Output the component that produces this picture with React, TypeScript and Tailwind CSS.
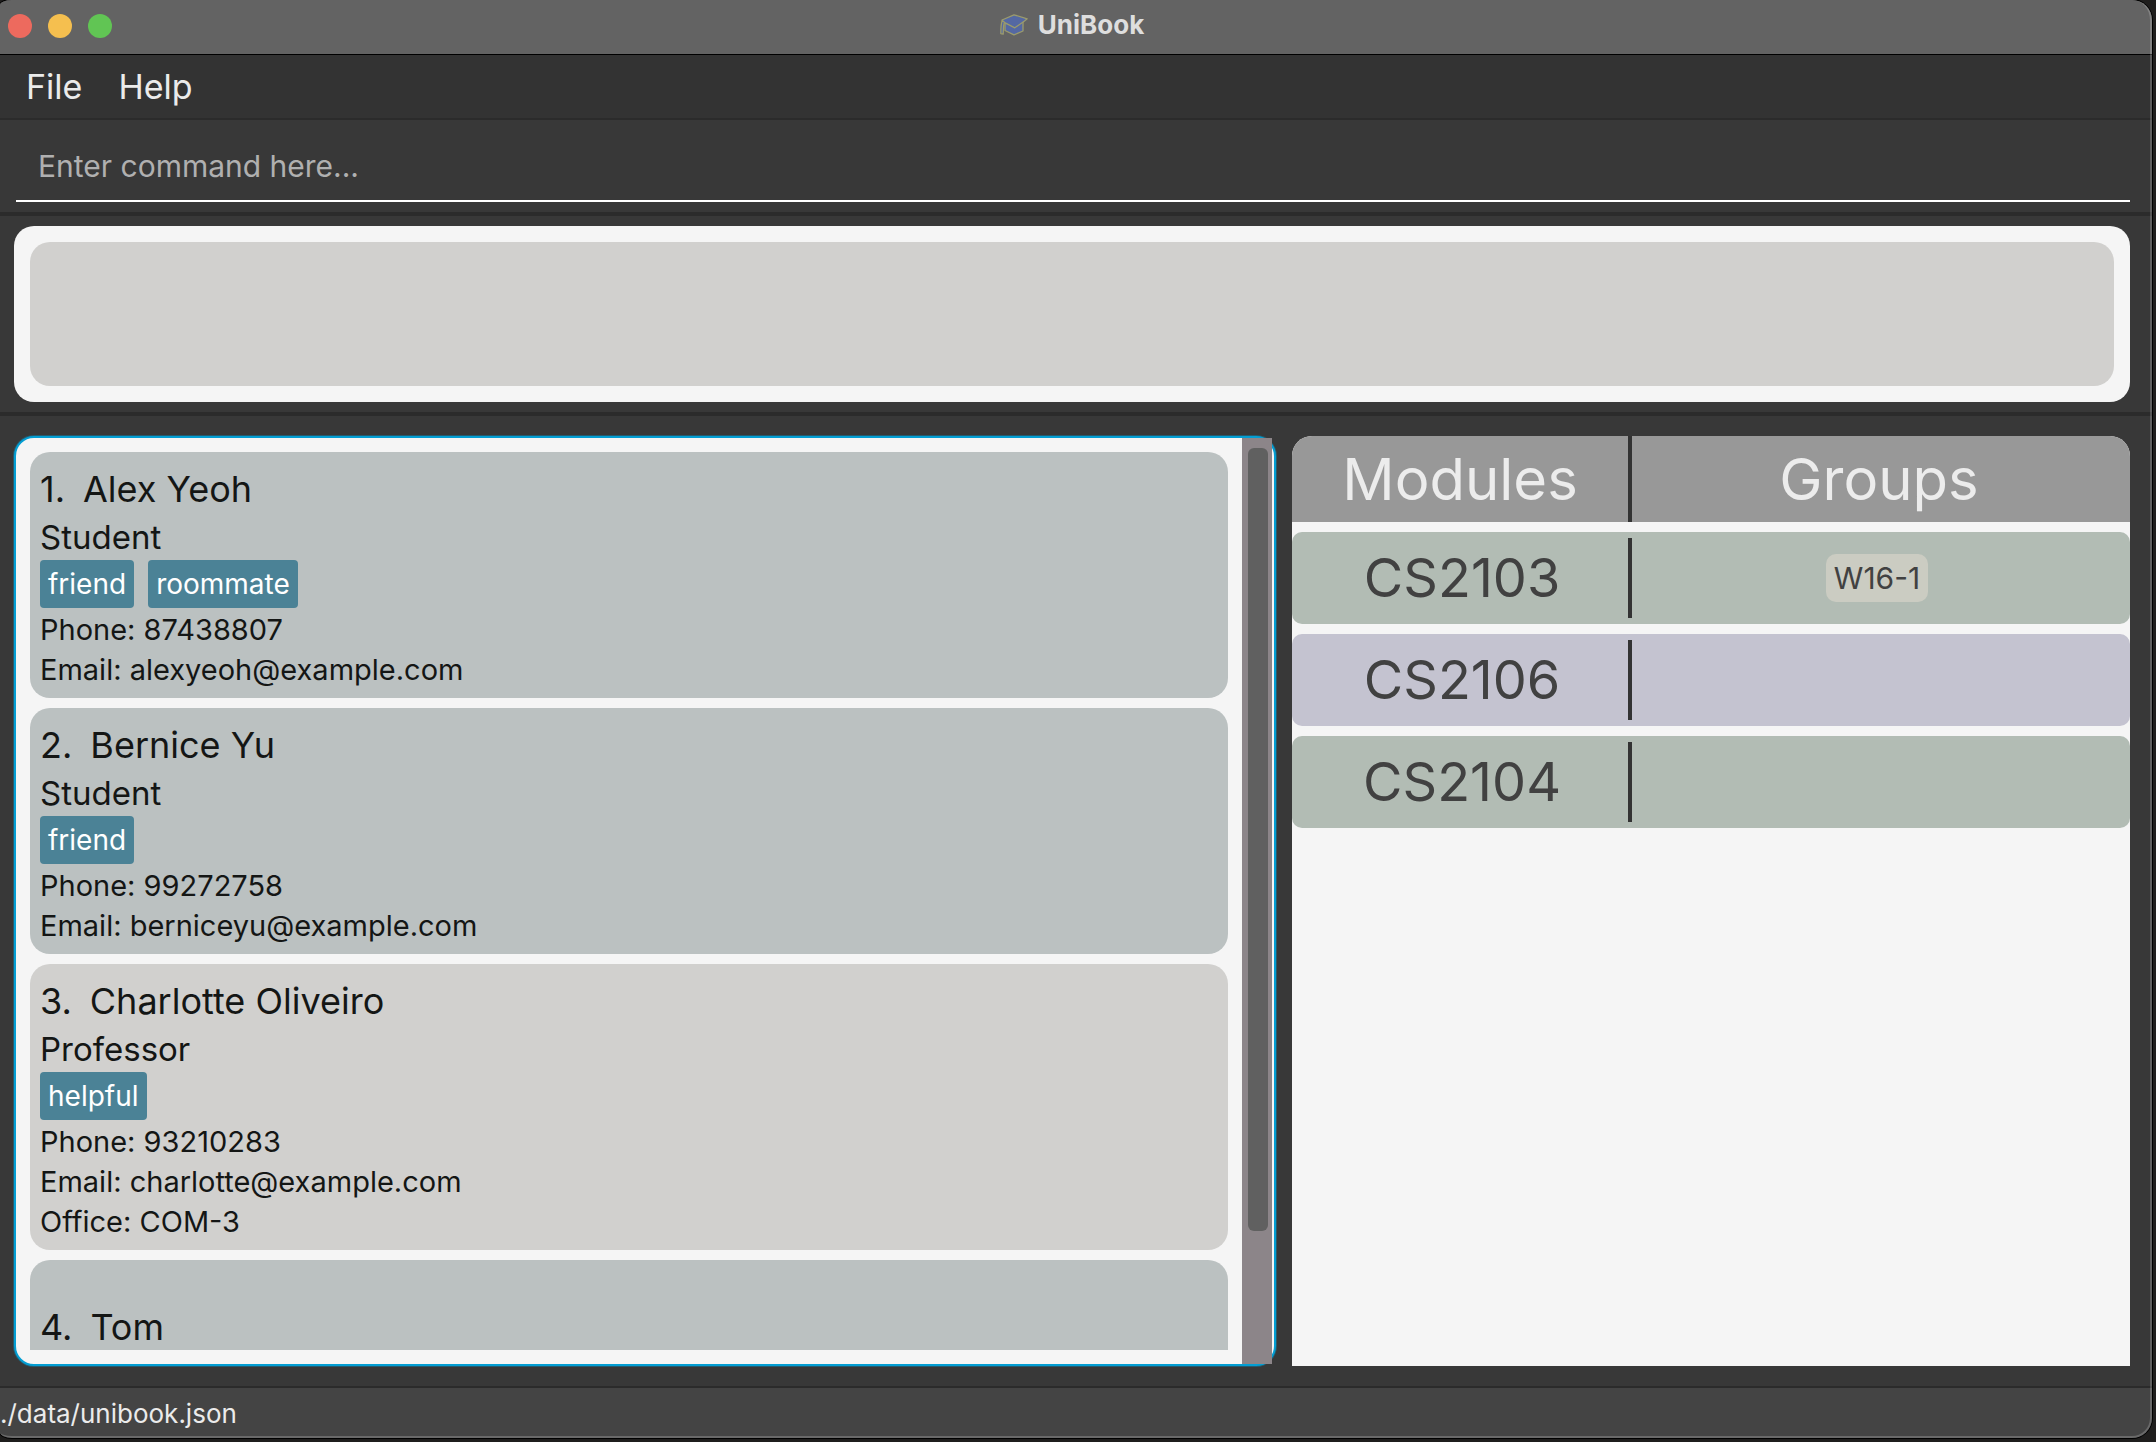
type Person = {
  id: number;
  name: string;
  role?: string;
  tags?: string[];
  details?: string[];
};

const people: Person[] = [
  {
    id: 1,
    name: "Alex Yeoh",
    role: "Student",
    tags: ["friend", "roommate"],
    details: ["Phone: 87438807", "Email: alexyeoh@example.com"],
  },
  {
    id: 2,
    name: "Bernice Yu",
    role: "Student",
    tags: ["friend"],
    details: ["Phone: 99272758", "Email: berniceyu@example.com"],
  },
  {
    id: 3,
    name: "Charlotte Oliveiro",
    role: "Professor",
    tags: ["helpful"],
    details: ["Phone: 93210283", "Email: charlotte@example.com", "Office: COM-3"],
  },
  { id: 4, name: "Tom" },
];

const modules = [
  { code: "CS2103", groups: ["W16-1"] },
  { code: "CS2106", groups: [] },
  { code: "CS2104", groups: [] },
];

function CapIcon() {
  return (
    <svg width="28" height="22" viewBox="0 0 28 22" aria-hidden="true">
      <g fill="#5468a3" stroke="#9b9b6c" strokeWidth="1.3" strokeLinejoin="round">
        <path d="M5 9.5V16.5L14 20.8L23 17V8Z" />
        <path d="M14 0.8L27.2 4.8L24.5 7L14.8 13.8L2.8 7.6L2 6Z" />
        <path d="M2.4 6.4C1 9 .8 13 .8 19.6L3.2 20.2C3.4 15 3.3 11 4.4 8.4Z" />
      </g>
    </svg>
  );
}

function TitleBar() {
  return (
    <header className="grid h-[55px] shrink-0 grid-cols-[1fr_auto_1fr] items-center border-b border-black bg-[#636363] pr-4 pb-0.5 pl-2">
      <div className="flex gap-4">
        <button type="button" aria-label="Close" className="size-6 rounded-full bg-[#ed6a5e]" />
        <button type="button" aria-label="Minimize" className="size-6 rounded-full bg-[#f5bf4f]" />
        <button type="button" aria-label="Zoom" className="size-6 rounded-full bg-[#61c554]" />
      </div>
      <h1 className="flex items-center gap-2.5 pb-0.5 text-[26px] leading-8 font-bold text-[#dedede]">
        <CapIcon />
        UniBook
      </h1>
    </header>
  );
}

function PersonCard({ person }: { person: Person }) {
  const isProfessor = person.role === "Professor";
  return (
    <li
      className={
        "shrink-0 rounded-[20px] px-2.5 " +
        (isProfessor ? "bg-[#d1d0ce] " : "bg-[#bbc1c1] ") +
        (person.role ? "pt-3 pb-2" : "py-[42px]")
      }
    >
      <h2 className="flex gap-[18px] text-[36px] leading-[50px]">
        <span>{person.id}.</span>
        <span>{person.name}</span>
      </h2>
      {person.role && <p className="text-[33px] leading-[46px]">{person.role}</p>}
      {person.tags && (
        <ul className="mb-0.5 flex gap-3.5">
          {person.tags.map((tag) => (
            <li key={tag} className="rounded bg-[#4b8296] px-2 text-[28px] leading-[48px] text-white">
              {tag}
            </li>
          ))}
        </ul>
      )}
      {person.details?.map((line) => (
        <p key={line} className="text-[29px] leading-[40px]">
          {line}
        </p>
      ))}
    </li>
  );
}

function PersonList() {
  return (
    <section
      aria-label="People"
      className="flex min-h-0 rounded-[20px] border-2 border-[#039ed3] bg-[#f5f5f5] pr-0.5 shadow-[0_0_0_1px_rgba(3,158,211,0.35)]"
    >
      <div className="flex min-w-0 flex-1 p-3.5">
        <ul className="flex flex-1 flex-col gap-2.5 overflow-hidden text-[#141615]">
          {people.map((p) => (
            <PersonCard key={p.id} person={p} />
          ))}
        </ul>
      </div>
      <div className="w-[30px] bg-[#8c8589] pt-2.5 pr-1 pl-1.5">
        <div className="h-[85.5%] rounded-md bg-[#606060]" />
      </div>
    </section>
  );
}

function ModuleTable() {
  return (
    <section aria-label="Modules and groups" className="overflow-hidden rounded-t-[20px] bg-[#f5f5f5]">
      <table className="block">
        <thead className="block">
          <tr className="grid h-[86px] grid-cols-[340fr_498fr] bg-[#989898] text-[58px] leading-none text-[#ececec]">
            <th className="flex items-center justify-center border-r-4 border-[#333333] font-normal">
              Modules
            </th>
            <th className="flex items-center justify-center pr-1 font-normal">Groups</th>
          </tr>
        </thead>
        <tbody className="mt-2.5 flex flex-col gap-2.5">
          {modules.map((m, i) => (
            <tr
              key={m.code}
              className={
                "grid h-[92px] grid-cols-[340fr_498fr] rounded-[10px] py-1.5 text-[#414141] " +
                (i % 2 ? "bg-[#c4c3d0]" : "bg-[#b2bcb4]")
              }
            >
              <td className="flex items-center justify-center border-r-4 border-[#333333] pl-1 text-[54px] leading-none">
                {m.code}
              </td>
              <td className="flex items-center justify-center gap-2.5 pr-2">
                {m.groups.map((g) => (
                  <span key={g} className="rounded-[10px] bg-[#cbccc2] px-2 text-[30px] leading-[48px]">
                    {g}
                  </span>
                ))}
              </td>
            </tr>
          ))}
        </tbody>
      </table>
    </section>
  );
}

export default function App() {
  return (
    <div className="h-screen bg-[#1f1e1d] pr-1 pb-1 font-['Inter',sans-serif]">
      <div className="relative flex h-full flex-col overflow-hidden rounded-tl-[12px_5px] rounded-r-[20px] rounded-bl-[12px_6px] bg-[#383838] shadow-[0_0_0_1px_#000000]">
        <TitleBar />

        <nav className="flex h-[65px] shrink-0 items-center border-b-2 border-[#2b2b2b] bg-[#333333] pl-2 text-[34px] leading-10 text-[#ebebeb]">
          <button type="button" className="px-[18px]">File</button>
          <button type="button" className="px-[18px]">Help</button>
        </nav>

        <form className="shrink-0 border-b-4 border-[#2b2b2b] pt-3 pr-[22px] pb-2.5 pl-4" onSubmit={(e) => e.preventDefault()}>
          <input
            type="text"
            aria-label="Command"
            placeholder="Enter command here..."
            className="h-[70px] w-full border-b-2 border-white bg-transparent px-[22px] text-[30px] text-white outline-none placeholder:text-[#b0b0b0]"
          />
        </form>

        <div className="shrink-0 border-b-4 border-[#2b2b2b] py-2.5 pr-[22px] pl-3.5">
          <div className="flex rounded-[20px] bg-[#f5f5f5] p-4">
            <textarea
              readOnly
              aria-label="Result"
              className="h-36 w-full resize-none rounded-[20px] bg-[#d1d0ce] outline-none"
            />
          </div>
        </div>

        <main className="grid min-h-0 flex-1 grid-cols-[601fr_399fr] grid-rows-[minmax(0,1fr)] gap-4 py-5 pr-[22px] pl-3.5">
          <PersonList />
          <ModuleTable />
        </main>

        <footer className="h-[52px] shrink-0 border-t-2 border-[#2b2b2b] bg-[#444444] pt-1.5 text-[26px] leading-[40px] text-[#ebebeb]">
          ./data/unibook.json
        </footer>

        <div className="pointer-events-none absolute inset-0 rounded-tl-[12px_5px] rounded-r-[20px] rounded-bl-[12px_6px] border-r-2 border-b-2 border-white/20" />
      </div>
    </div>
  );
}
